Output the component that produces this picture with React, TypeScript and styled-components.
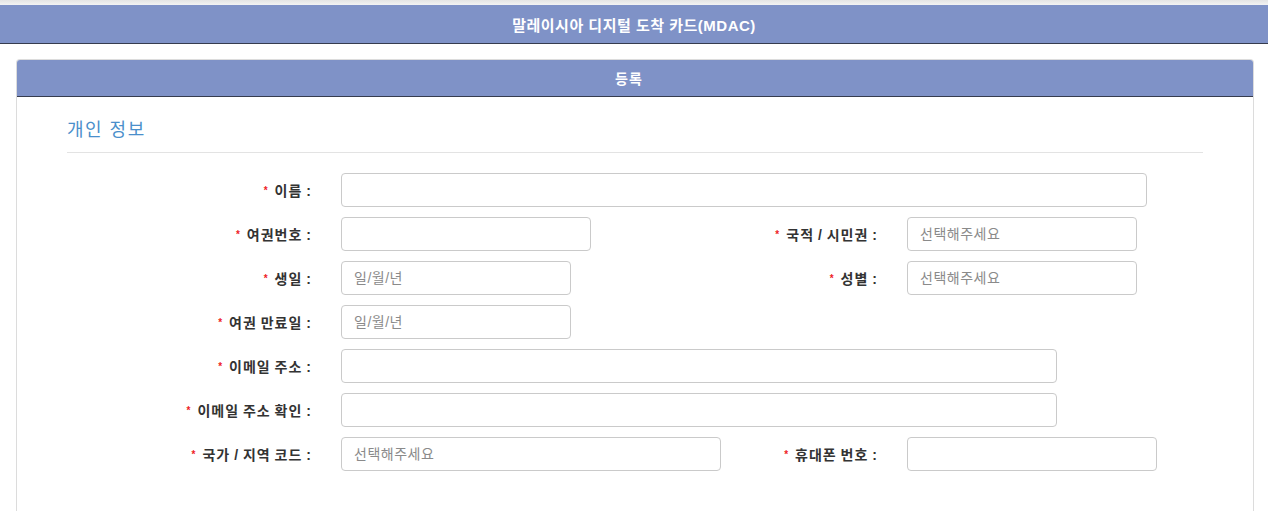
import styled, { createGlobalStyle } from "styled-components";

const GlobalStyle = createGlobalStyle`
  html, body {
    margin: 0;
    padding: 0;
    background: #fff;
    font-family: "Liberation Sans", "Noto Sans CJK KR", sans-serif;
    color: #333;
  }
`;

const TopStrip = styled.div`
  height: 5px;
  background: linear-gradient(#e4e4e4, #f3f3f3);
`;

const HeaderBar = styled.header`
  height: 38px;
  background: #7f92c7;
  border-bottom: 1px solid #363c4e;
  display: flex;
  align-items: center;
  justify-content: center;
  color: #fff;
  font-size: 15px;
  font-weight: 700;
  letter-spacing: 0.5px;
`;

const Panel = styled.section`
  margin: 15px 14px 0 16px;
  border: 1px solid #dcdcdc;
  border-bottom: none;
  border-radius: 4px 4px 0 0;
`;

const PanelHeading = styled.div`
  height: 36px;
  padding-right: 12px;
  background: #7f92c7;
  border-bottom: 1px solid #363c4e;
  border-radius: 3px 3px 0 0;
  display: flex;
  align-items: center;
  justify-content: center;
  color: #fff;
  font-size: 14px;
  font-weight: 700;
  letter-spacing: 1px;
`;

const PanelBody = styled.div`
  padding: 20px 50px 40px 50px;
`;

const SectionTitle = styled.h3`
  margin: 0;
  padding-bottom: 9px;
  border-bottom: 1px solid #e3e3e3;
  font-size: 18px;
  font-weight: 400;
  line-height: 26px;
  letter-spacing: 1.5px;
  color: #4a8fcb;
`;

const Form = styled.div`
  margin-top: 20px;
  display: grid;
  grid-template-columns: 244px 380px 126px 265px;
  column-gap: 30px;
  row-gap: 10px;
  align-items: center;
`;

const Label = styled.label`
  justify-self: end;
  white-space: nowrap;
  font-size: 14px;
  font-weight: 700;
  letter-spacing: 1px;
  word-spacing: -1px;
  color: #333;
`;

const Star = styled.span`
  color: #ee1c25;
  font-size: 10px;
  letter-spacing: 0;
  margin-right: 7px;
  vertical-align: 2px;
`;

const Colon = styled.span`
  letter-spacing: 0;
  margin-left: 4px;
`;

const Input = styled.input<{ $w: number; $span?: boolean }>`
  box-sizing: border-box;
  width: ${(p) => p.$w}px;
  height: 34px;
  padding: 0 12px;
  border: 1px solid #cacaca;
  border-radius: 4px;
  background: #fff;
  font-family: "Liberation Sans", "Noto Sans CJK KR", sans-serif;
  font-size: 14px;
  letter-spacing: 0.5px;
  color: #555;
  grid-column: ${(p) => (p.$span ? "2 / -1" : "auto")};
  &::placeholder {
    color: #8a8a8a;
  }
`;

const Blank = styled.div`
  grid-column: 3 / -1;
`;

function Field({ label }: { label: string }) {
  return (
    <Label>
      <Star>*</Star>
      {label}
      <Colon>:</Colon>
    </Label>
  );
}

export default function App() {
  return (
    <>
      <GlobalStyle />
      <TopStrip />
      <HeaderBar>말레이시아 디지털 도착 카드(MDAC)</HeaderBar>
      <Panel>
        <PanelHeading>등록</PanelHeading>
        <PanelBody>
          <SectionTitle>개인 정보</SectionTitle>
          <Form>
            <Field label="이름" />
            <Input $w={806} $span />

            <Field label="여권번호" />
            <Input $w={250} />
            <Field label="국적 / 시민권" />
            <Input $w={230} placeholder="선택해주세요" />

            <Field label="생일" />
            <Input $w={230} placeholder="일/월/년" />
            <Field label="성별" />
            <Input $w={230} placeholder="선택해주세요" />

            <Field label="여권 만료일" />
            <Input $w={230} placeholder="일/월/년" />
            <Blank />

            <Field label="이메일 주소" />
            <Input $w={716} $span />

            <Field label="이메일 주소 확인" />
            <Input $w={716} $span />

            <Field label="국가 / 지역 코드" />
            <Input $w={380} placeholder="선택해주세요" />
            <Field label="휴대폰 번호" />
            <Input $w={250} />
          </Form>
        </PanelBody>
      </Panel>
    </>
  );
}
